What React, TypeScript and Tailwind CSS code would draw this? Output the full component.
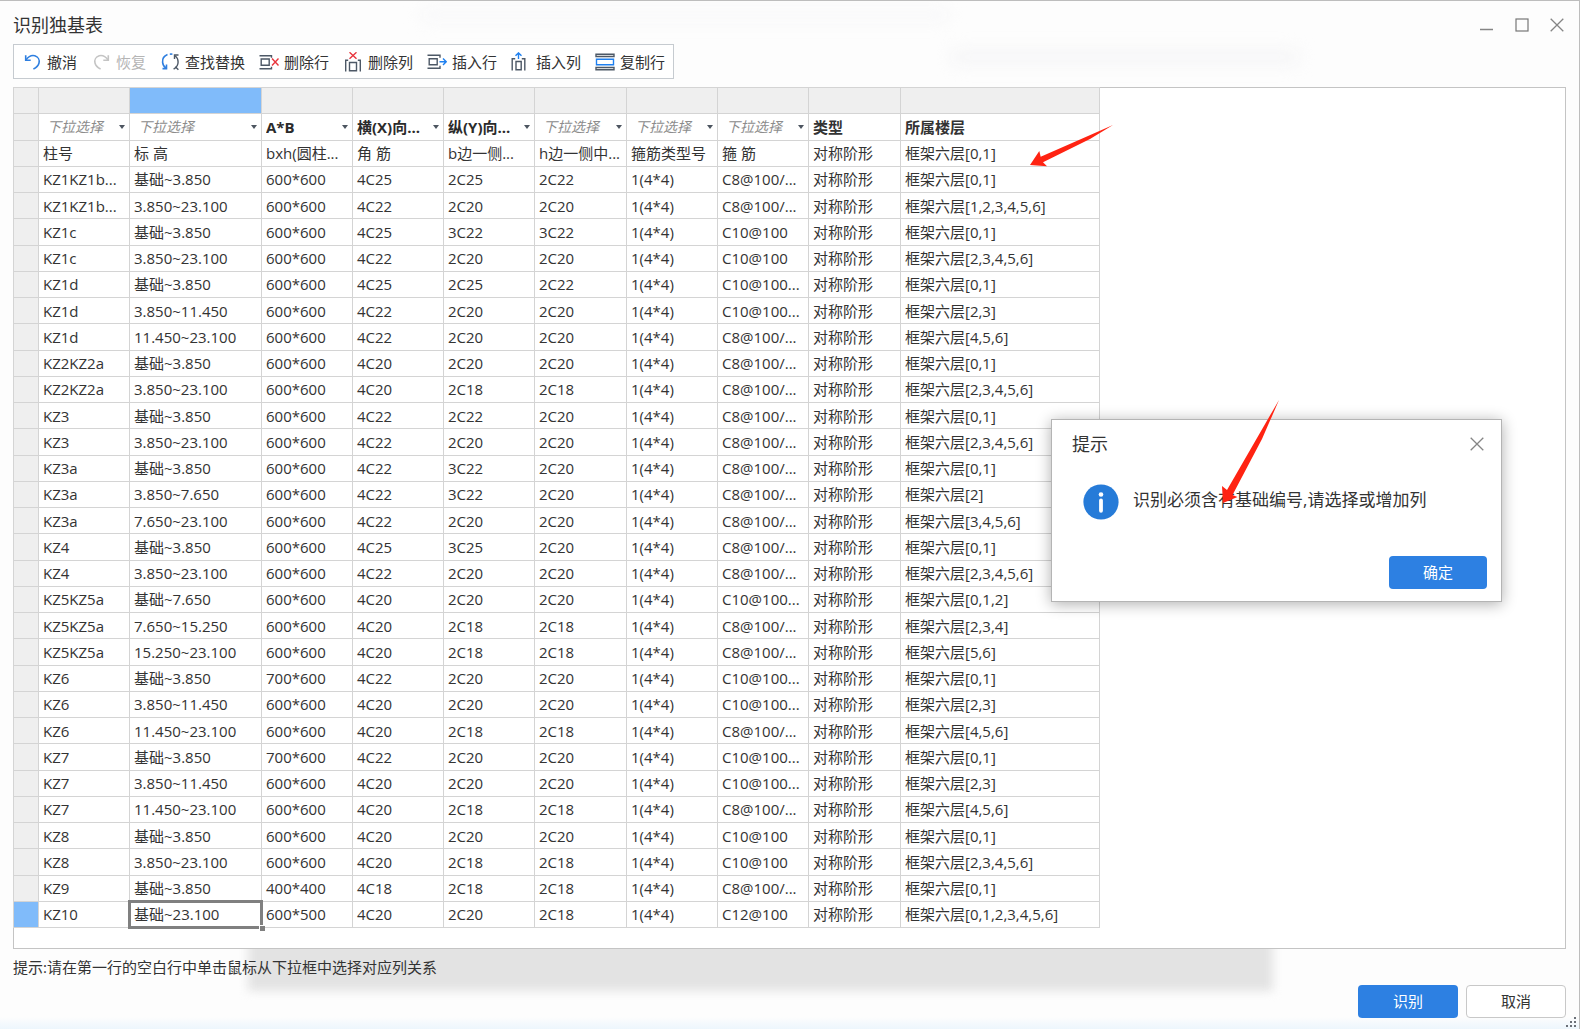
import type { ReactNode } from 'react';

type Column = { label: string; width: string; kind: 'empty' | 'picked' | 'fixed' };

const columns: Column[] = [
  { label: '下拉选择', width: 'w-[91px]', kind: 'empty' },
  { label: '下拉选择', width: 'w-[132px]', kind: 'empty' },
  { label: 'A*B', width: 'w-[91px]', kind: 'picked' },
  { label: '横(X)向...', width: 'w-[91px]', kind: 'picked' },
  { label: '纵(Y)向...', width: 'w-[91px]', kind: 'picked' },
  { label: '下拉选择', width: 'w-[92px]', kind: 'empty' },
  { label: '下拉选择', width: 'w-[91px]', kind: 'empty' },
  { label: '下拉选择', width: 'w-[91px]', kind: 'empty' },
  { label: '类型', width: 'w-[92px]', kind: 'fixed' },
  { label: '所属楼层', width: 'w-[199px]', kind: 'fixed' },
];

const SELECTED_COL = 1;

// number | elevation | size | corner | b side | h side | stirrup type | stirrup | floors
const source = `柱号|标 高|bxh(圆柱...|角 筋|b边一侧...|h边一侧中...|箍筋类型号|箍 筋|0,1
KZ1KZ1b...|基础~3.850|600*600|4C25|2C25|2C22|1(4*4)|C8@100/...|0,1
KZ1KZ1b...|3.850~23.100|600*600|4C22|2C20|2C20|1(4*4)|C8@100/...|1,2,3,4,5,6
KZ1c|基础~3.850|600*600|4C25|3C22|3C22|1(4*4)|C10@100|0,1
KZ1c|3.850~23.100|600*600|4C22|2C20|2C20|1(4*4)|C10@100|2,3,4,5,6
KZ1d|基础~3.850|600*600|4C25|2C25|2C22|1(4*4)|C10@100...|0,1
KZ1d|3.850~11.450|600*600|4C22|2C20|2C20|1(4*4)|C10@100...|2,3
KZ1d|11.450~23.100|600*600|4C22|2C20|2C20|1(4*4)|C8@100/...|4,5,6
KZ2KZ2a|基础~3.850|600*600|4C20|2C20|2C20|1(4*4)|C8@100/...|0,1
KZ2KZ2a|3.850~23.100|600*600|4C20|2C18|2C18|1(4*4)|C8@100/...|2,3,4,5,6
KZ3|基础~3.850|600*600|4C22|2C22|2C20|1(4*4)|C8@100/...|0,1
KZ3|3.850~23.100|600*600|4C22|2C20|2C20|1(4*4)|C8@100/...|2,3,4,5,6
KZ3a|基础~3.850|600*600|4C22|3C22|2C20|1(4*4)|C8@100/...|0,1
KZ3a|3.850~7.650|600*600|4C22|3C22|2C20|1(4*4)|C8@100/...|2
KZ3a|7.650~23.100|600*600|4C22|2C20|2C20|1(4*4)|C8@100/...|3,4,5,6
KZ4|基础~3.850|600*600|4C25|3C25|2C20|1(4*4)|C8@100/...|0,1
KZ4|3.850~23.100|600*600|4C22|2C20|2C20|1(4*4)|C8@100/...|2,3,4,5,6
KZ5KZ5a|基础~7.650|600*600|4C20|2C20|2C20|1(4*4)|C10@100...|0,1,2
KZ5KZ5a|7.650~15.250|600*600|4C20|2C18|2C18|1(4*4)|C8@100/...|2,3,4
KZ5KZ5a|15.250~23.100|600*600|4C20|2C18|2C18|1(4*4)|C8@100/...|5,6
KZ6|基础~3.850|700*600|4C22|2C20|2C20|1(4*4)|C10@100...|0,1
KZ6|3.850~11.450|600*600|4C20|2C20|2C20|1(4*4)|C10@100...|2,3
KZ6|11.450~23.100|600*600|4C20|2C18|2C18|1(4*4)|C8@100/...|4,5,6
KZ7|基础~3.850|700*600|4C22|2C20|2C20|1(4*4)|C10@100...|0,1
KZ7|3.850~11.450|600*600|4C20|2C20|2C20|1(4*4)|C10@100...|2,3
KZ7|11.450~23.100|600*600|4C20|2C18|2C18|1(4*4)|C8@100/...|4,5,6
KZ8|基础~3.850|600*600|4C20|2C20|2C20|1(4*4)|C10@100|0,1
KZ8|3.850~23.100|600*600|4C20|2C18|2C18|1(4*4)|C10@100|2,3,4,5,6
KZ9|基础~3.850|400*400|4C18|2C18|2C18|1(4*4)|C8@100/...|0,1
KZ10|基础~23.100|600*500|4C20|2C20|2C18|1(4*4)|C12@100|0,1,2,3,4,5,6`;

const rows = source.split('\n').map((line) => {
  const cells = line.split('|');
  const floors = cells.pop();
  return [...cells, '对称阶形', `框架六层[${floors}]`];
});

function Icon({ children }: { children: ReactNode }) {
  return (
    <svg width="20" height="20" viewBox="0 0 20 20" fill="none" strokeWidth="1.4" aria-hidden="true">
      {children}
    </svg>
  );
}

const tools: { label: string; disabled?: boolean; icon: ReactNode }[] = [
  {
    label: '撤消',
    icon: (
      <g stroke="#2f7fe0" strokeWidth="1.6">
        <path d="M3.7 3.2v5h5" />
        <path d="M3.9 8C6.4 4.6 9.8 3 12.8 3.8c3.2.9 5 4 4.2 7.200-.6 2.400-2.600 4.600-5.600 6" />
      </g>
    ),
  },
  {
    label: '恢复',
    disabled: true,
    icon: (
      <g stroke="#c4c4c4" strokeWidth="1.6">
        <path d="M17.3 3.2v5h-5" />
        <path d="M17.1 8C14.600 4.600 11.200 3 8.200 3.800c-3.200.9-5 4-4.200 7.200.6 2.400 2.600 4.600 5.600 6" />
      </g>
    ),
  },
  {
    label: '查找替换',
    icon: (
      <>
        <g stroke="#2f7fe0" strokeWidth="1.6">
          <path d="M7.500 2.600C4.100 3.900 2.300 7 2.600 10.400c.2 2.300 1.400 4.300 3.300 5.600" />
          <path d="M2.500 16.600h4v-4" />
          <path d="M9.800 2.100h2.600" />
        </g>
        <g stroke="#4d5866">
          <path d="M13.600 17.200c2.800-1.600 4.500-4.300 4.500-7.200 0-2.500-1.100-4.700-3-6.200" />
          <path d="M18.500 3h-4v4" />
          <path d="M15.400 14.800l3 3" />
        </g>
      </>
    ),
  },
  {
    label: '删除行',
    icon: (
      <>
        <path d="M.5 3.700h12v2M.5 16.700h12v-2M2.200 7h8v6.300h-8z" stroke="#4d5866" />
        <path d="M13 6.500l6.500 7M19.500 6.500l-6.500 7" stroke="#e8343c" />
      </>
    ),
  },
  {
    label: '删除列',
    icon: (
      <>
        <path d="M2.700 19.500V8.200h2.500M14.800 8.200h2.500v11.300M6.500 10.500h7v8.300h-7z" stroke="#4d5866" />
        <path d="M6.500 .3l7 6.500M13.500 .3l-7 6.500" stroke="#e8343c" />
      </>
    ),
  },
  {
    label: '插入行',
    icon: (
      <>
        <path d="M.5 3.200h12.500v2.500M.5 16.200h12.500v-2.500M2.200 6.700h8v6h-8z" stroke="#4d5866" />
        <path d="M12.500 9.700h6.500M16 6.500l3.200 3.200L16 12.900" stroke="#1f80f0" />
      </>
    ),
  },
  {
    label: '插入列',
    icon: (
      <>
        <path d="M1.200 18.500V6.700h3M10.800 6.700h3v11.800M5 9.500h5.200v8.300H5z" stroke="#4d5866" />
        <path d="M7.500 7V1M4.500 3.800L7.500 .9l3 2.900" stroke="#1f80f0" />
      </>
    ),
  },
  {
    label: '复制行',
    icon: (
      <>
        <path d="M1 2.200h18v2.300H1zM1 15.500h18v2.300H1z" stroke="#4d5866" />
        <path d="M1.500 7.200h17v5.600h-17z" stroke="#1f80f0" />
      </>
    ),
  },
];

function CloseIcon() {
  return (
    <svg width="14" height="14" viewBox="0 0 14 14" stroke="#858585" strokeWidth="1.3" aria-hidden="true">
      <path d="M.7.7l12.600 12.600M13.300.7L.7 13.300" />
    </svg>
  );
}

function HeaderCell({ column, index }: { column: Column; index: number }) {
  if (column.kind === 'fixed') {
    return <span className="px-1 font-bold">{column.label}</span>;
  }
  const tone =
    column.kind === 'empty' ? 'pl-1 text-sm italic text-[#8c8c8c]' : 'text-[15px] font-bold text-[#2b2b2b]';
  return (
    <div className="flex items-center px-1">
      <select
        aria-label={`第${index + 1}列`}
        className={`min-w-0 flex-1 appearance-none bg-transparent leading-5 outline-none ${tone}`}
      >
        <option>{column.label}</option>
      </select>
      <svg width="6" height="4" viewBox="0 0 6 4" fill="#4d5560" className="shrink-0" aria-hidden="true">
        <path d="M0 0h6L3 4z" />
      </svg>
    </div>
  );
}

function Grid() {
  const line = 'border border-[#d4d4d4]';
  return (
    <table className="-ml-px -mt-px h-[841px] w-[1087px] table-fixed border-collapse text-left text-[15px] leading-5">
      <colgroup>
        <col className="w-[25px]" />
        {columns.map((c, i) => (
          <col key={i} className={c.width} />
        ))}
      </colgroup>
      <tbody>
        <tr className="h-[26px]">
          <td className={`${line} bg-[#efefef]`} />
          {columns.map((_, i) => (
            <td key={i} className={`${line} ${i === SELECTED_COL ? 'bg-[#80bbfa]' : 'bg-[#efefef]'}`} />
          ))}
        </tr>
        <tr className="h-[26px]">
          <td className={`${line} bg-[#efefef]`} />
          {columns.map((c, i) => (
            <th key={i} className={`${line} p-0 font-normal`}>
              <HeaderCell column={c} index={i} />
            </th>
          ))}
        </tr>
        {rows.map((cells, r) => {
          const last = r === rows.length - 1;
          return (
            <tr key={r} className="h-[26px]">
              <td className={`${line} ${last ? 'bg-[#80bbfa]' : 'bg-[#efefef]'}`} />
              {cells.map((text, c) => (
                <td key={c} className={`${line} relative whitespace-nowrap px-1 py-0`}>
                  {text}
                  {last && c === SELECTED_COL && (
                    <>
                      <span className="absolute -inset-[2px] border-3 border-[#808080]" />
                      <span className="absolute -bottom-1 -right-1 size-[6px] border-l border-t border-white bg-[#808080]" />
                    </>
                  )}
                </td>
              ))}
            </tr>
          );
        })}
      </tbody>
    </table>
  );
}

function MessageBox() {
  return (
    <div
      role="dialog"
      aria-label="提示"
      className="absolute right-[77px] top-[418px] flex w-[451px] flex-col border border-[#b4b4b4] bg-white pb-3 pl-5 pr-[14px] pt-3 shadow-[0_2px_14px_rgba(0,0,0,0.32)]"
    >
      <div className="flex items-center justify-between">
        <h2 className="text-lg leading-6">提示</h2>
        <button type="button" aria-label="关闭" className="mr-[3px]">
          <CloseIcon />
        </button>
      </div>
      <div className="mt-7 flex items-center gap-[14px] pl-[11px]">
        <svg width="36" height="36" viewBox="0 0 36 36" aria-hidden="true">
          <circle cx="18" cy="18" r="17.6" fill="#267bd8" />
          <circle cx="18" cy="10.5" r="2.3" fill="#fff" />
          <path d="M18 16.500v10.300" stroke="#fff" strokeWidth="3.8" strokeLinecap="round" />
        </svg>
        <p className="whitespace-nowrap pb-1 text-[17px] leading-6">识别必须含有基础编号,请选择或增加列</p>
      </div>
      <button type="button" className="mt-9 h-[33px] w-[98px] self-end rounded bg-[#2d80e2] text-[15px] text-white">
        确定
      </button>
    </div>
  );
}

export default function App() {
  return (
    <div className="relative flex min-h-screen flex-col overflow-hidden border-r border-t border-[#bdbdbd] bg-[#fdfdfd] px-[13px] font-['Open_Sans','Noto_Sans_CJK_SC',sans-serif] text-[#333]">
      {/* Faint shapes showing through the translucent frame */}
      <div className="absolute left-[420px] top-2 h-3 w-[530px] rounded-full bg-[#f8f8f9] blur-sm" />
      <div className="absolute left-[950px] top-12 h-4 w-[350px] rounded-full bg-[#f6f6f7] blur-sm" />
      <div className="absolute bottom-[38px] left-[248px] right-[306px] h-20 bg-[#e3e3e3] blur-[5px]" />
      <div className="absolute inset-x-0 bottom-0 h-3 bg-linear-to-b from-transparent to-[#edf6fd]" />

      <header className="relative flex h-[43px] items-center justify-between">
        <h1 className="pt-1 text-lg leading-6">识别独基表</h1>
        <div className="flex items-center gap-[21px] pr-[2px] pt-1">
          <button type="button" aria-label="最小化">
            <svg width="14" height="14" viewBox="0 0 14 14" stroke="#858585" aria-hidden="true">
              <path d="M0 11.500h13" strokeWidth="1.5" />
            </svg>
          </button>
          <button type="button" aria-label="最大化">
            <svg width="14" height="14" viewBox="0 0 14 14" fill="none" stroke="#777" strokeWidth="1.2" aria-hidden="true">
              <rect x="1" y="1" width="12" height="12" />
            </svg>
          </button>
          <button type="button" aria-label="关闭">
            <CloseIcon />
          </button>
        </div>
      </header>

      <div role="toolbar" className="relative flex h-[35px] items-center gap-[14px] self-start border border-[#c6cbd0] bg-white px-2">
        {tools.map((tool) => (
          <button
            key={tool.label}
            type="button"
            disabled={tool.disabled}
            className="flex items-center gap-[5px] whitespace-nowrap text-[15px] leading-5 disabled:text-[#b5b5b5]"
          >
            <Icon>{tool.icon}</Icon>
            {tool.label}
          </button>
        ))}
      </div>

      <main className="relative mt-2 flex-1 border border-[#c4c4c4] bg-white">
        <Grid />
      </main>

      <footer className="relative flex h-20 flex-col justify-between pb-[11px] pt-2">
        <p className="text-[15px] leading-5">提示:请在第一行的空白行中单击鼠标从下拉框中选择对应列关系</p>
        <div className="flex justify-end gap-2">
          <button type="button" className="h-[33px] w-[100px] rounded bg-[#2d80e2] text-[15px] text-white">
            识别
          </button>
          <button type="button" className="h-[33px] w-[100px] rounded border border-[#c8c8c8] bg-white text-[15px]">
            取消
          </button>
        </div>
      </footer>

      <svg width="11" height="11" viewBox="0 0 11 11" fill="#6b7078" className="absolute bottom-[1px] right-[2px]" aria-hidden="true">
        <path d="M8 0h2v2H8zM4 4h2v2H4zM8 4h2v2H8zM0 8h2v2H0zM4 8h2v2H4zM8 8h2v2H8z" />
      </svg>

      <MessageBox />

      {/* Red annotation arrows */}
      <svg width="84" height="42" viewBox="0 0 84 42" fill="#ff2312" className="absolute right-[465px] top-[124px]" aria-hidden="true">
        <path d="M0 40L9.300 26l1.400 5.700L58 11 83 0 60 14 13 37.300l4 4z" />
      </svg>
      <svg width="60" height="104" viewBox="0 0 60 104" fill="#ff2312" className="absolute right-[297px] top-[399px]" aria-hidden="true">
        <path d="M1 103L0 86l5 4L35 38 57 0 40 39 10.500 95l5 2z" />
      </svg>
    </div>
  );
}
